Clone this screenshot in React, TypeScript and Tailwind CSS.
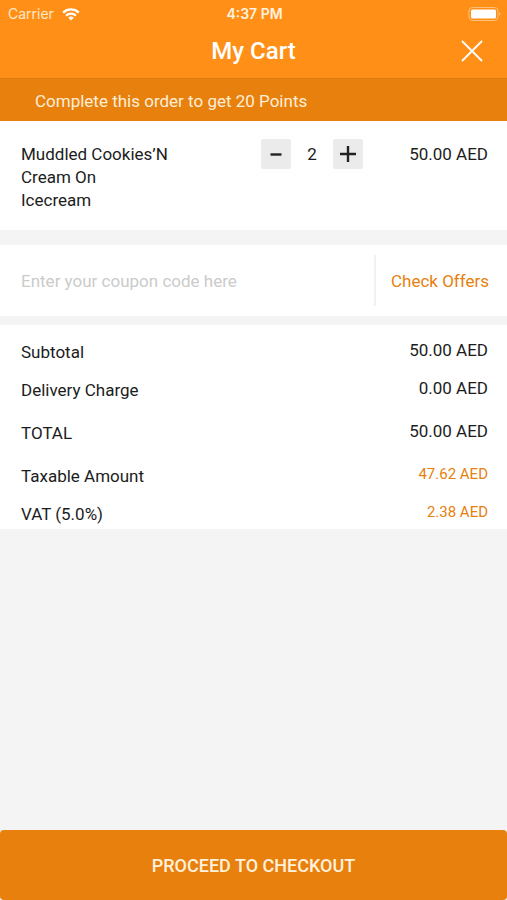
import { useState } from "react";

type SummaryRowProps = {
  label: string;
  amount: string;
  className?: string;
  tax?: boolean;
};

const SummaryRow = ({ label, amount, className = "", tax }: SummaryRowProps) => {
  return (
    <div className={`flex h-[30px] items-center justify-between ${className}`}>
      <dt>{label}</dt>
      <dd className={tax ? "pb-1 text-[15px] text-[#e8800e]" : "pb-1"}>
        {amount}
      </dd>
    </div>
  );
};

const StatusBar = () => {
  return (
    <div className="grid h-7 grid-cols-3 items-center pl-2 pr-1.5 font-['Inter',sans-serif] text-sm">
      <div className="flex items-center gap-2 text-[#ffe9c9]">
        <span>Carrier</span>
        <svg width="18" height="13" viewBox="0 0 18 13" fill="none" stroke="white">
          <path d="M1.2 4.6a11.2 11.2 0 0 1 15.6 0" strokeWidth="2.3" />
          <path d="M4.1 7.6a7.1 7.1 0 0 1 9.8 0" strokeWidth="2.2" />
          <path d="M9 12.6 6.2 9.7a4.1 4.1 0 0 1 5.6 0z" fill="white" stroke="none" />
        </svg>
      </div>
      <span className="text-center font-semibold text-[#fff3df]">4:37 PM</span>
      <svg className="justify-self-end" width="33" height="14" viewBox="0 0 33 14">
        <rect x="1" y="0.5" width="29" height="13" rx="3.5" fill="none" stroke="#ffc078" />
        <rect x="3" y="2.5" width="25" height="9" rx="1.5" fill="white" />
        <path d="M31.2 5v4c1.6-.6 1.6-3.4 0-4z" fill="#ffc078" />
      </svg>
    </div>
  );
};

export default function App() {
  const [quantity, setQuantity] = useState(2);

  return (
    <div className="flex min-h-screen flex-col bg-[#f4f4f4] font-['Roboto',sans-serif] text-[17px] leading-[22px] text-[#1c1c1c]">
      <header className="bg-[#ff8f17] text-white">
        <StatusBar />
        <div className="grid h-[50px] grid-cols-[48px_1fr_48px] items-center px-4 pb-1">
          <h1 className="col-start-2 text-center text-2xl font-medium">My Cart</h1>
          <button type="button" aria-label="Close" className="justify-self-end p-2">
            <svg width="22" height="24" viewBox="0 0 22 24" stroke="white" strokeWidth="1.8">
              <path d="M1 2l20 20M21 2L1 22" />
            </svg>
          </button>
        </div>
      </header>

      <p className="flex h-[43px] items-center border-t border-[#dc7c13] bg-[#e8800e] px-[35px] pt-0.5 text-[#ffeed6]">
        Complete this order to get 20 Points
      </p>

      <section className="flex h-[109px] items-start bg-white pl-[21px] pr-[19px] pt-[18px]">
        <h2 className="w-[148px] pt-1 leading-[23px]">
          Muddled Cookies’N Cream On Icecream
        </h2>
        <div className="ml-auto flex items-center">
          <button
            type="button"
            aria-label="Decrease quantity"
            onClick={() => setQuantity(Math.max(1, quantity - 1))}
            className="flex size-[30px] items-center justify-center rounded-xs bg-[#ebebeb]">
            <svg width="16" height="16" viewBox="0 0 16 16" stroke="#222" strokeWidth="2.4">
              <path d="M2.500 8.500h11" />
            </svg>
          </button>
          <span className="w-[42px] text-center">{quantity}</span>
          <button
            type="button"
            aria-label="Increase quantity"
            onClick={() => setQuantity(quantity + 1)}
            className="flex size-[30px] items-center justify-center rounded-xs bg-[#ebebeb]">
            <svg width="16" height="16" viewBox="0 0 16 16" stroke="#222" strokeWidth="2.4">
              <path d="M0 8h16M8 0v16" />
            </svg>
          </button>
        </div>
        <span className="w-[125px] pt-1 text-right leading-[23px]">50.00 AED</span>
      </section>

      <form className="mt-[15px] flex h-[71px] items-center bg-white">
        <input
          type="text"
          aria-label="Coupon code"
          placeholder="Enter your coupon code here"
          className="min-w-0 flex-1 px-[21px] outline-none placeholder:text-[#cbcbcb]"
        />
        <button
          type="button"
          className="h-[51px] border-l-2 border-[#f1f1f1] pl-[15px] pr-[18px] text-[#e8800e]">
          Check Offers
        </button>
      </form>

      <dl className="mt-[9px] bg-white pl-[21px] pr-[19px] pt-3">
        <SummaryRow label="Subtotal" amount="50.00 AED" />
        <SummaryRow label="Delivery Charge" amount="0.00 AED" className="mt-2" />
        <SummaryRow label="TOTAL" amount="50.00 AED" className="mt-[13px]" />
        <SummaryRow label="Taxable Amount" amount="47.62 AED" className="mt-[13px]" tax />
        <SummaryRow label="VAT (5.0%)" amount="2.38 AED" className="mt-2" tax />
      </dl>

      <button
        type="button"
        className="mt-auto h-[70px] w-full rounded-sm bg-[#e8800e] pt-0.5 text-lg font-medium text-[#fff1dc]">
        PROCEED TO CHECKOUT
      </button>
    </div>
  );
}
